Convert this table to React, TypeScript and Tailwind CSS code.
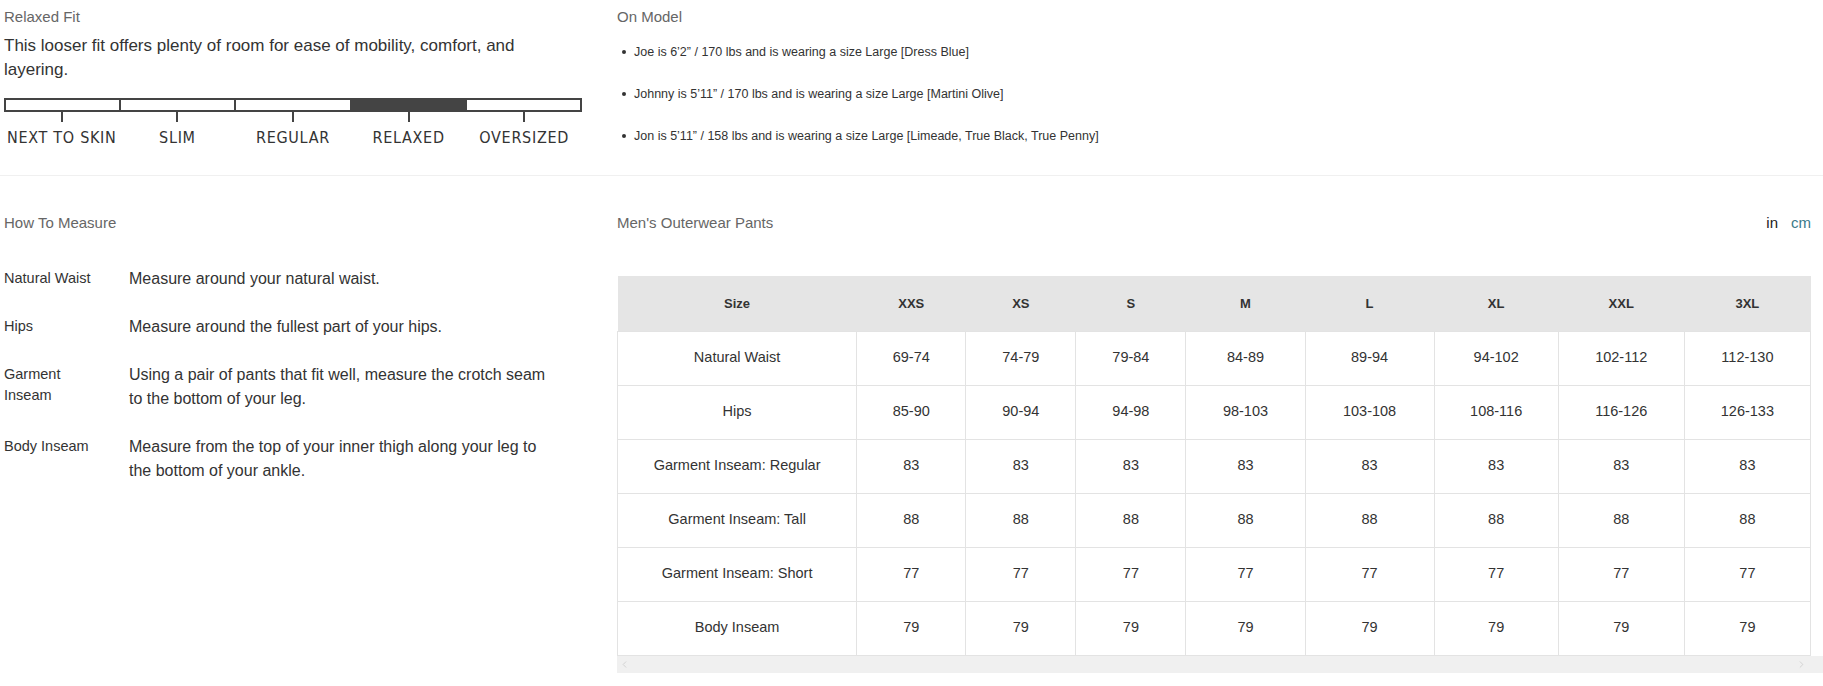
import { ChevronLeft, ChevronRight } from "lucide-react";

const FITS = ["NEXT TO SKIN", "SLIM", "REGULAR", "RELAXED", "OVERSIZED"];
const ACTIVE_FIT = 3;

const MODELS = [
  "Joe is 6\u20192\u201D / 170 lbs and is wearing a size Large [Dress Blue]",
  "Johnny is 5\u201911\u201D / 170 lbs and is wearing a size Large [Martini Olive]",
  "Jon is 5\u201911\u201D / 158 lbs and is wearing a size Large [Limeade, True Black, True Penny]",
];

const MEASURES = [
  { label: "Natural Waist", text: "Measure around your natural waist." },
  { label: "Hips", text: "Measure around the fullest part of your hips." },
  { label: "Garment Inseam", text: "Using a pair of pants that fit well, measure the crotch seam to the bottom of your leg." },
  { label: "Body Inseam", text: "Measure from the top of your inner thigh along your leg to the bottom of your ankle." },
];

const SIZES = ["XXS", "XS", "S", "M", "L", "XL", "XXL", "3XL"];
const COL_WIDTHS = [239, 109, 110, 110, 119, 129, 124, 126, 126];

const ROWS: [string, string[]][] = [
  ["Natural Waist", ["69-74", "74-79", "79-84", "84-89", "89-94", "94-102", "102-112", "112-130"]],
  ["Hips", ["85-90", "90-94", "94-98", "98-103", "103-108", "108-116", "116-126", "126-133"]],
  ["Garment Inseam: Regular", Array(8).fill("83")],
  ["Garment Inseam: Tall", Array(8).fill("88")],
  ["Garment Inseam: Short", Array(8).fill("77")],
  ["Body Inseam", Array(8).fill("79")],
];

function FitScale() {
  return (
    <div className="w-[578px] mt-[16px]">
      <div className="flex h-[14px] border-2 border-[#444]">
        {FITS.map((fit, i) => (
          <div
            key={fit}
            className={`flex-1 ${i > 0 ? "border-l-2 border-[#444]" : ""} ${i === ACTIVE_FIT ? "bg-[#444]" : "bg-white"}`}
          />
        ))}
      </div>
      <div className="flex">
        {FITS.map((fit) => (
          <div key={fit} className="flex-1 flex justify-center">
            <div className="w-[2px] h-[10px] bg-[#444]" />
          </div>
        ))}
      </div>
      <div className="flex mt-[6px]">
        {FITS.map((fit) => (
          <div
            key={fit}
            className="flex-1 text-center text-[16px] leading-[20px] tracking-[0.7px] text-[#333] font-['Liberation_Sans_Narrow','DejaVu_Sans_Condensed','Liberation_Sans',sans-serif]"
          >
            {fit}
          </div>
        ))}
      </div>
    </div>
  );
}

export default function App() {
  return (
    <div className="w-[1823px] h-[686px] bg-white text-[#333] font-['Liberation_Sans',Arial,sans-serif] overflow-hidden">
      <section className="flex h-[176px] border-b border-[#f0f0f0]">
        <div className="w-[617px] pl-[4px] pt-[7px]">
          <h3 className="text-[15px] leading-[20px] text-[#666]">Relaxed Fit</h3>
          <p className="mt-[7px] w-[560px] text-[17px] leading-[24px]">
            This looser fit offers plenty of room for ease of mobility, comfort, and layering.
          </p>
          <FitScale />
        </div>
        <div className="flex-1 pt-[7px]">
          <h3 className="text-[15px] leading-[20px] text-[#666]">On Model</h3>
          <ul className="mt-[16px] flex flex-col gap-y-[24px]">
            {MODELS.map((m) => (
              <li key={m} className="flex items-center text-[12.5px] leading-[18px]">
                <span className="ml-[5px] mr-[8px] w-[4px] h-[4px] rounded-full bg-[#333]" />
                {m}
              </li>
            ))}
          </ul>
        </div>
      </section>

      <section className="flex">
        <div className="w-[617px] pl-[4px] pt-[37px]">
          <h3 className="text-[15px] leading-[20px] text-[#666]">How To Measure</h3>
          <div className="mt-[34px] flex flex-col gap-y-[24px]">
            {MEASURES.map((m) => (
              <div key={m.label} className="flex items-start">
                <div className="w-[125px] pr-[25px] pt-[1px] text-[14.5px] leading-[21px]">{m.label}</div>
                <div className="w-[425px] text-[16px] leading-[24px]">{m.text}</div>
              </div>
            ))}
          </div>
        </div>

        <div className="flex-1 pt-[37px]">
          <div className="flex items-center justify-between pr-[12px] h-[20px]">
            <h3 className="text-[15px] leading-[20px] text-[#666]">Men's Outerwear Pants</h3>
            <div className="flex gap-x-[13px] text-[15px] leading-[20px]">
              <span className="text-[#222]">in</span>
              <span className="text-[#3b7a8a]">cm</span>
            </div>
          </div>

          <div className="mt-[43px]">
            <table className="table-fixed w-[1194px] border-collapse text-center">
              <colgroup>
                {COL_WIDTHS.map((w, i) => (
                  <col key={i} style={{ width: w }} />
                ))}
              </colgroup>
              <thead>
                <tr className="bg-[#e5e5e5] h-[55px]">
                  <th className="text-[13px] font-bold text-[#333]">Size</th>
                  {SIZES.map((s) => (
                    <th key={s} className="text-[13px] font-bold text-[#333]">
                      {s}
                    </th>
                  ))}
                </tr>
              </thead>
              <tbody>
                {ROWS.map(([name, vals]) => (
                  <tr key={name} className="h-[54px]">
                    <td className="border border-[#e3e3e3] text-[14.5px]">{name}</td>
                    {vals.map((v, i) => (
                      <td key={i} className="border border-[#e3e3e3] text-[14.5px]">
                        {v}
                      </td>
                    ))}
                  </tr>
                ))}
              </tbody>
            </table>
            <div className="flex items-center justify-between h-[17px] bg-[#f0f0f0] px-[2px]">
              <ChevronLeft size={11} strokeWidth={1.5} className="text-[#c4c4c4]" />
              <ChevronRight size={11} strokeWidth={1.5} className="text-[#c4c4c4] mr-[14px]" />
            </div>
          </div>
        </div>
      </section>
    </div>
  );
}
